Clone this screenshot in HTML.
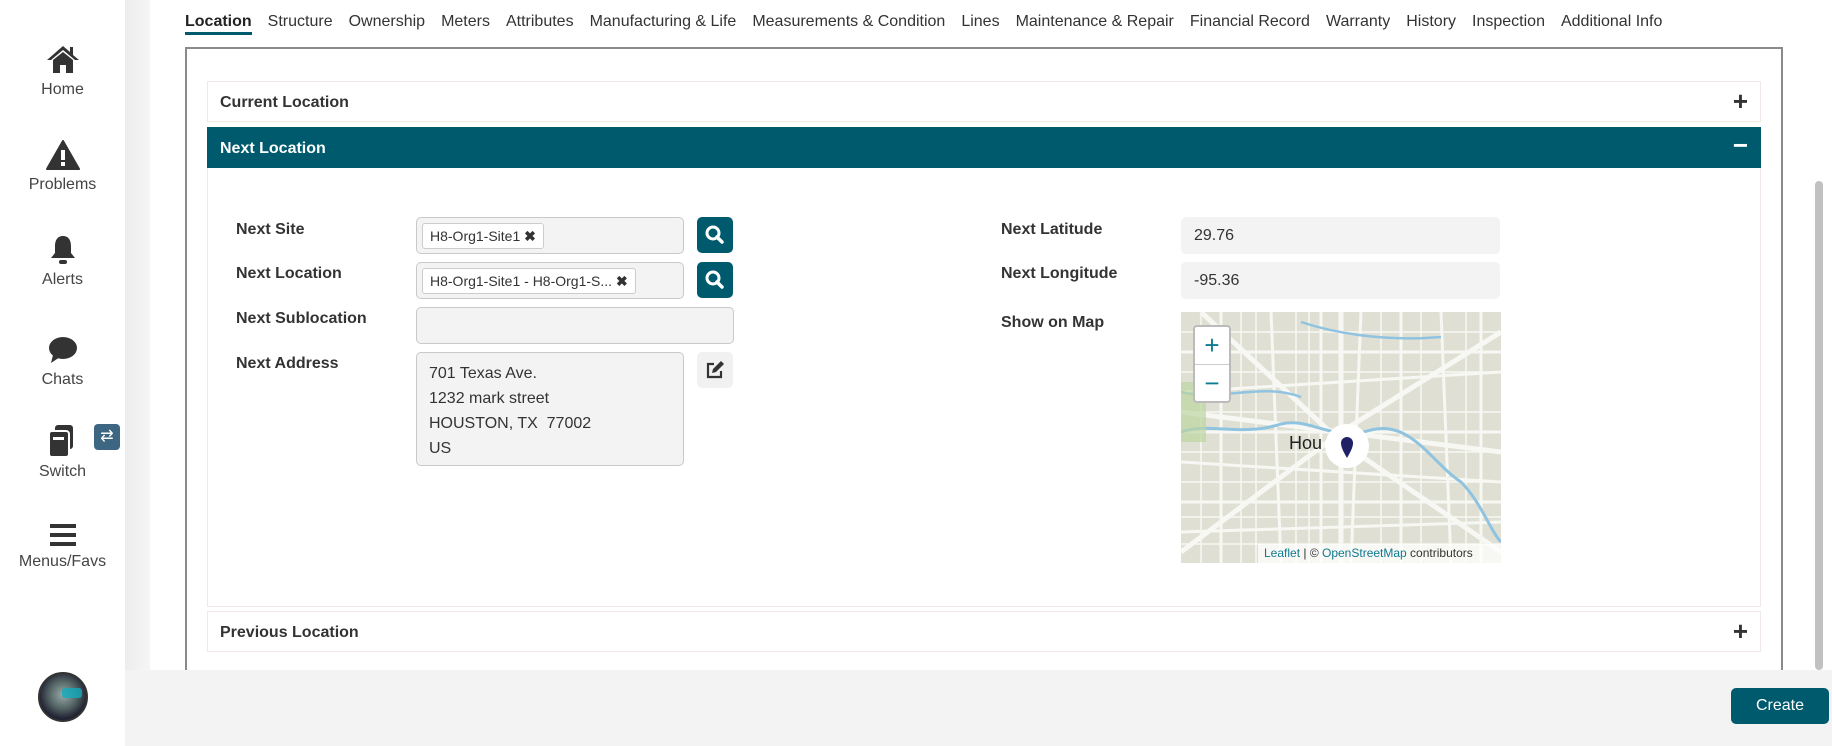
<!DOCTYPE html>
<html><head><meta charset="utf-8"><style>
*{box-sizing:border-box;margin:0;padding:0}
body{width:1832px;height:746px;position:relative;overflow:hidden;background:#fff;font-family:"Liberation Sans",sans-serif;color:#333}
.abs{position:absolute}
.side{left:0;top:0;width:125px;height:746px;background:#fff}
.strip{left:125px;top:0;width:25px;height:670px;background:linear-gradient(90deg,#ececec,#f6f6f6)}
.nav{position:absolute;left:0;width:125px;text-align:center;font-size:16px;color:#444}
.tabs{left:185px;top:13px;font-size:16px;color:#333;white-space:nowrap}
.tabs span{margin-right:16px}
.tabs .act{font-weight:bold;color:#222;border-bottom:3px solid #005a6e;padding-bottom:2px}
.cont{left:185px;top:47px;width:1598px;height:640px;border:2px solid #8a8a8a;border-bottom:none}
.hdr{left:207px;width:1554px;height:41px;border:1px solid #f1e9e9;font-size:16px;font-weight:bold;color:#333;padding:12px 12px;background:#fff}
.hdr .pm{position:absolute;right:12px;top:4px;font-size:26px;font-weight:bold}
.lbl{font-size:16px;font-weight:bold;color:#333}
.inp{background:#f3f3f3;border:1px solid #c9c9c9;border-radius:5px}
.inp2{background:#f3f3f3;border-radius:5px}
.chip{position:absolute;left:5px;top:5px;height:26px;background:#fff;border:1px solid #ccc;border-radius:3px;font-size:14px;padding:4px 7px;white-space:nowrap}
.btn{width:36px;height:36px;background:#005a6e;border-radius:5px}
</style></head><body>
<div class="abs side">
 <div class="nav" style="top:44px"><svg width="36" height="30" viewBox="0 0 36 30"><path d="M18 2 L2 16 L6 16 L18 6 L30 16 L34 16 L28 11 L28 3 L25 3 L25 8 Z" fill="#333"/><path d="M8 16 L18 8 L28 16 L28 29 L21 29 L21 21 L15 21 L15 29 L8 29Z" fill="#333"/></svg><div style="margin-top:2px">Home</div></div>
 <div class="nav" style="top:140px"><svg width="34" height="30" viewBox="0 0 34 30"><path d="M17 1 L33 29 L1 29 Z" fill="#333" stroke="#333" stroke-width="2" stroke-linejoin="round"/><rect x="15" y="10" width="4" height="10" fill="#fff"/><rect x="15" y="22" width="4" height="4" fill="#fff"/></svg><div style="margin-top:1px">Problems</div></div>
 <div class="nav" style="top:234px"><svg width="30" height="32" viewBox="0 0 30 32"><path d="M15 2 C9 2 7 7 7 12 L7 19 L3 24 L27 24 L23 19 L23 12 C23 7 21 2 15 2Z" fill="#333"/><rect x="11" y="26" width="8" height="4" rx="2" fill="#333"/></svg><div>Alerts</div></div>
 <div class="nav" style="top:335px"><svg width="32" height="30" viewBox="0 0 32 30"><ellipse cx="16" cy="13" rx="14" ry="11" fill="#333"/><path d="M6 20 L4 28 L13 22Z" fill="#333"/></svg><div style="margin-top:1px">Chats</div></div>
 <div class="nav" style="top:424px"><svg width="36" height="34" viewBox="0 0 36 34"><rect x="10" y="1" width="18" height="24" rx="3" fill="#333"/><rect x="4" y="7" width="20" height="26" rx="3" fill="#333" stroke="#fff" stroke-width="2"/><rect x="8" y="13" width="11" height="3" fill="#fff"/></svg><div>Switch</div></div>
 <div class="abs" style="left:94px;top:424px;width:26px;height:26px;background:#3d6683;border-radius:4px;color:#fff;font-size:16px;text-align:center;line-height:26px">⇄</div>
 <div class="nav" style="top:522px"><svg width="30" height="26" viewBox="0 0 30 26"><rect x="2" y="2" width="26" height="4" fill="#333"/><rect x="2" y="11" width="26" height="4" fill="#333"/><rect x="2" y="20" width="26" height="4" fill="#333"/></svg><div>Menus/Favs</div></div>
 <div class="abs" style="left:38px;top:672px;width:50px;height:50px;border-radius:50%;background:radial-gradient(circle at 50% 45%,#9aa 0,#566 40%,#223 70%);border:2px solid #333"><div style="position:absolute;left:22px;top:14px;width:20px;height:10px;background:#1ab;border-radius:3px;opacity:.8"></div></div>
</div>
<div class="abs strip"></div>
<div class="abs tabs"><span class="act">Location</span><span>Structure</span><span>Ownership</span><span>Meters</span><span>Attributes</span><span>Manufacturing &amp; Life</span><span>Measurements &amp; Condition</span><span>Lines</span><span>Maintenance &amp; Repair</span><span>Financial Record</span><span>Warranty</span><span>History</span><span>Inspection</span><span>Additional Info</span></div>
<div class="abs cont"></div>
<div class="abs" style="left:1815px;top:181px;width:8px;height:489px;background:#c1c1c1;border-radius:4px"></div>
<div class="abs hdr" style="top:81px">Current Location<span class="pm">+</span></div>
<div class="abs hdr" style="top:127px;background:#005a6e;color:#fff;border-color:#005a6e">Next Location<span class="pm" style="top:2px">−</span></div>
<div class="abs" style="left:207px;top:168px;width:1554px;height:439px;border:1px solid #f1e9e9;border-top:none"></div>
<div class="abs hdr" style="top:611px">Previous Location<span class="pm">+</span></div>

<div class="abs lbl" style="left:236px;top:221px">Next Site</div>
<div class="abs lbl" style="left:236px;top:265px">Next Location</div>
<div class="abs lbl" style="left:236px;top:310px">Next Sublocation</div>
<div class="abs lbl" style="left:236px;top:355px">Next Address</div>
<div class="abs inp" style="left:416px;top:217px;width:268px;height:37px"><div class="chip">H8-Org1-Site1 <b>✖</b></div></div>
<div class="abs inp" style="left:416px;top:262px;width:268px;height:37px"><div class="chip">H8-Org1-Site1 - H8-Org1-S... <b>✖</b></div></div>
<div class="abs inp" style="left:416px;top:307px;width:318px;height:37px"></div>
<div class="abs inp" style="left:416px;top:352px;width:268px;height:114px;font-size:16px;line-height:25px;padding:8px 12px">701 Texas Ave.<br>1232 mark street<br>HOUSTON, TX&nbsp; 77002<br>US</div>
<div class="abs btn" style="left:697px;top:217px"><svg width="36" height="36"><circle cx="16" cy="16" r="6" stroke="#fff" stroke-width="3" fill="none"/><line x1="20" y1="20" x2="25" y2="25" stroke="#fff" stroke-width="3.5" stroke-linecap="round"/></svg></div>
<div class="abs btn" style="left:697px;top:262px"><svg width="36" height="36"><circle cx="16" cy="16" r="6" stroke="#fff" stroke-width="3" fill="none"/><line x1="20" y1="20" x2="25" y2="25" stroke="#fff" stroke-width="3.5" stroke-linecap="round"/></svg></div>
<div class="abs" style="left:697px;top:352px;width:36px;height:36px;background:#f1f1f1;border-radius:5px"><svg width="36" height="36"><path d="M17 12 H11 V25 H24 V19" stroke="#333" stroke-width="2.2" fill="none"/><path d="M15 21 L16 17 L24 9 L27 12 L19 20Z" fill="#333"/></svg></div>

<div class="abs lbl" style="left:1001px;top:221px">Next Latitude</div>
<div class="abs lbl" style="left:1001px;top:265px">Next Longitude</div>
<div class="abs lbl" style="left:1001px;top:314px">Show on Map</div>
<div class="abs inp2" style="left:1181px;top:217px;width:319px;height:37px;font-size:16px;padding:10px 13px">29.76</div>
<div class="abs inp2" style="left:1181px;top:262px;width:319px;height:37px;font-size:16px;padding:10px 13px">-95.36</div>
<div class="abs" style="left:1181px;top:312px;width:320px;height:251px;overflow:hidden;background:#dfe0d3">
<svg width="320" height="251" style="position:absolute;left:0;top:0">
<g stroke="#f7f7f3" stroke-width="3" fill="none">
<path d="M0 40 H320 M0 80 L320 60 M0 120 H320 M0 150 L320 170 M0 190 H320 M0 220 L320 210 M40 0 V251 M90 0 L100 251 M140 0 V251 M180 0 L170 251 M220 0 V251 M260 0 L270 251 M300 0 V251"/>
<path d="M0 240 L160 120 L320 20 M20 0 L160 130 L320 240 M160 0 V251 M0 100 L320 140" stroke-width="5"/>
<path d="M60 0 V251 M115 0 V251 M200 0 V251 M240 0 V251 M0 60 H320 M0 100 H320 M0 170 H320 M0 205 H320 M20 0 V251 M75 0 V251 M128 0 V251 M285 0 V251 M0 20 H320 M0 140 H320 M0 232 H320" stroke-width="1.5"/>
</g>
<path d="M0 120 C30 110 60 125 100 112 C130 105 150 130 190 118 C230 108 250 150 280 170 C300 190 310 220 320 230" stroke="#8fc3e0" stroke-width="3" fill="none"/>
<path d="M0 80 C40 90 80 70 120 85 M120 10 C150 20 200 30 260 25" stroke="#8fc3e0" stroke-width="2.5" fill="none"/>
<rect x="0" y="70" width="25" height="60" fill="#bcd6a0" opacity=".7"/>
<circle cx="166" cy="134" r="22" fill="#fff"/>
<path d="M166 146 C162 139 160 135 160 131 A6 6 0 0 1 172 131 C172 135 170 139 166 146Z" fill="#1f2066"/>
<text x="108" y="137" font-family="Liberation Sans,sans-serif" font-size="18" fill="#222">Hou</text>
</svg>
<div style="position:absolute;left:12px;top:13px;width:38px;height:78px;background:#fff;border:2px solid #bbb;border-radius:4px;color:#0e7a91;font-size:26px;text-align:center;line-height:37px"><div style="border-bottom:1px solid #ccc">+</div><div>−</div></div>
<div style="position:absolute;left:77px;top:232px;width:243px;height:19px;background:rgba(255,255,255,.75);font-size:12px;padding:2px 6px;color:#333">  <span style="color:#0e7a91">Leaflet</span> | © <span style="color:#0e7a91">OpenStreetMap</span> contributors</div>
</div>

<div class="abs" style="left:125px;top:670px;width:1707px;height:76px;background:#f3f3f3"></div>
<div class="abs" style="left:1731px;top:688px;width:98px;height:36px;background:#005a6e;border-radius:5px;color:#fff;font-size:16px;text-align:center;line-height:36px">Create</div>
</body></html>
